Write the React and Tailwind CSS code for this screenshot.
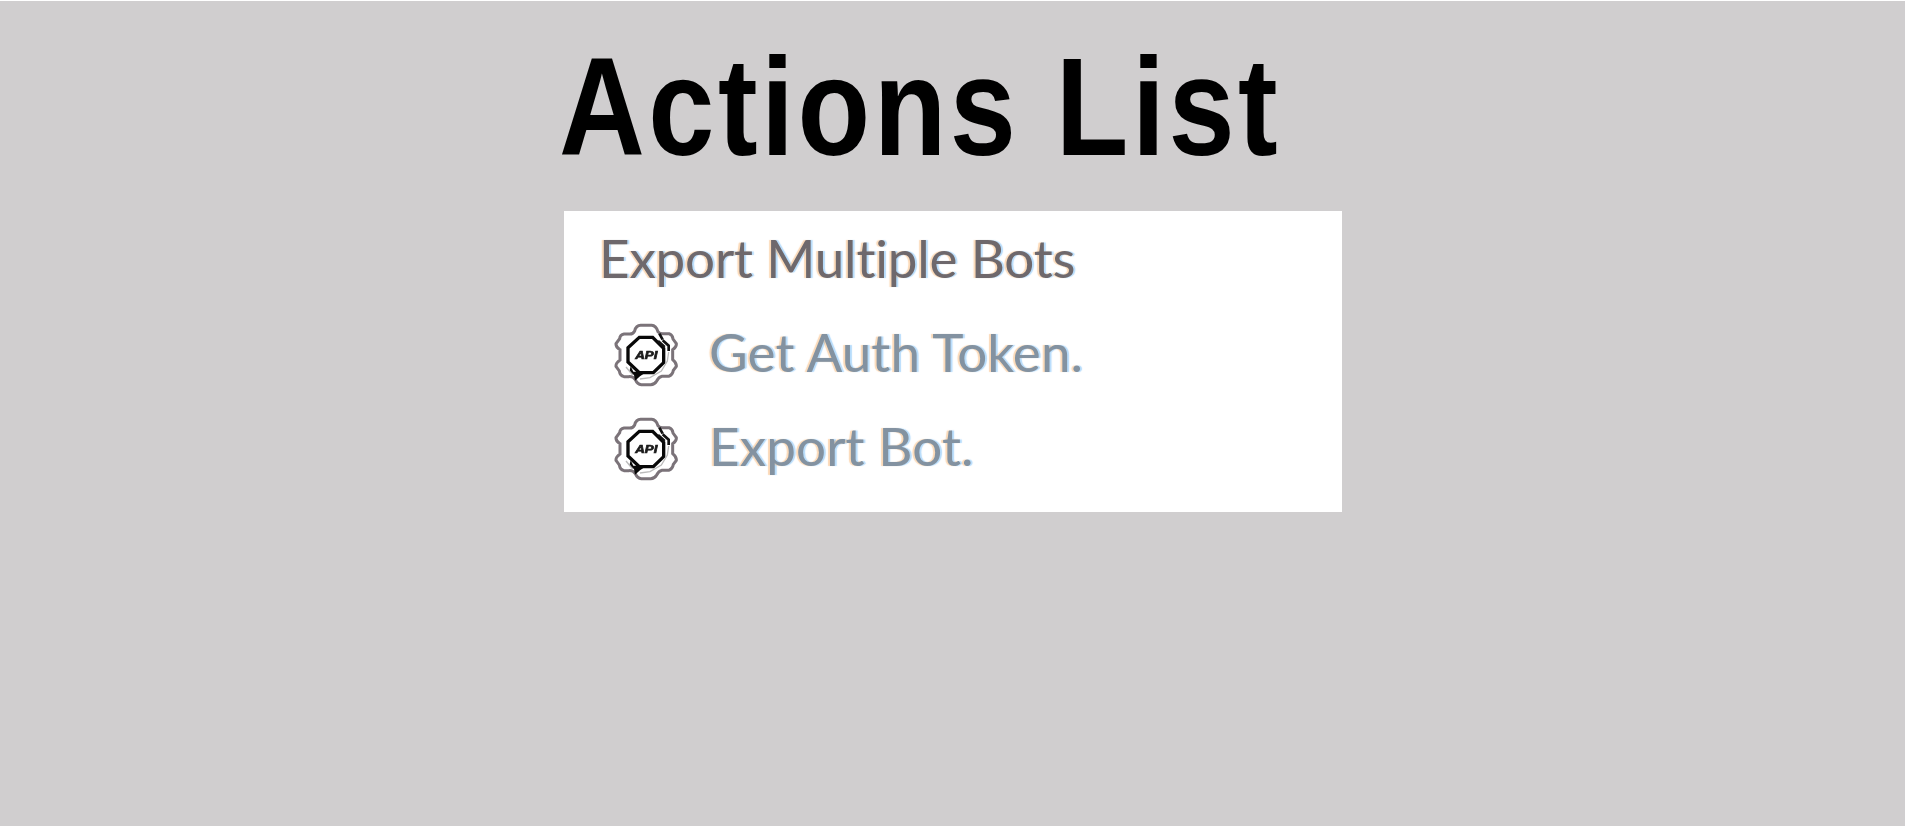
import React from 'react';

const ApiGearIcon = () => (
  <svg viewBox="42 38 192 192" className="mt-[5px] w-16 h-16 shrink-0 blur-[0.7px]" fill="none">
    {/* Scalloped outline */}
    <path
      d="M104 62Q108 45 122 45H155Q168 46 174 64Q180 71 190 70H207Q218 74 219 86L229 100Q230 110 218 118V148Q230 158 229 168L220 180Q218 194 206 198H186Q176 200 170 212Q164 223 152 223H124Q112 222 106 208Q98 197 86 199H72Q60 196 58 182L48 168Q47 158 60 149V118Q47 110 48 100L59 85Q60 73 72 71H86Q98 73 104 62Z"
      stroke="#7b7379"
      strokeWidth="9"
    />
    {/* Ring */}
    <path
      d="M118 81H158L191 114V157L160 187H118L84 155V112Z"
      stroke="#080808"
      strokeWidth="10"
    />
    {/* Rotation arrows */}
    <path d="M178 70L188 88M174 92L194 110M188 90L206 106V122" stroke="#111" strokeWidth="8" />
    <path d="M92 168L100 184H140L120 198L105 211L102 194L88 184" fill="#080808" />
    <path d="M78 170L98 194M206 125L202 152L184 182L150 202L120 206" stroke="#bbb" strokeWidth="4" />
    <text
      x="139"
      y="146"
      textAnchor="middle"
      textLength="66"
      lengthAdjust="spacingAndGlyphs"
      fontSize="31"
      fontWeight="900"
      fontStyle="italic"
      fill="#1c1c1c"
      stroke="#1c1c1c"
      strokeWidth="2"
      className="font-['Liberation_Sans',sans-serif]"
    >
      API
    </text>
  </svg>
);

const actions = ['Get Auth Token.', 'Export Bot.'];

const App = () => {
  return (
    <div className="min-h-screen bg-[#d0cecf] border-t border-white">
      <div className="ml-[564px] w-[778px]">
        {/* Title */}
        <h1 className="h-[210px] pt-[31px] -ml-[5px] origin-left scale-x-[0.855] whitespace-nowrap font-['Liberation_Sans',sans-serif] text-[139px] leading-[150px] tracking-[4.1px] font-bold text-black">
          Actions List
        </h1>

        {/* Actions panel */}
        <div className="h-[301px] bg-white font-['Lato',sans-serif] text-[53px] leading-[94px] whitespace-nowrap [font-variant-ligatures:none]">
          <h2 className="h-[94px] pl-[35px] tracking-[-0.2px] text-[#6e686c] [text-shadow:-2px_0_1px_#f5a04a66,2px_0_1px_#4aa8f566]">
            Export Multiple Bots
          </h2>
          <ul>
            {actions.map((action) => (
              <li key={action} className="flex items-center h-[94px] pl-[50px] gap-[31px]">
                <ApiGearIcon />
                <span className="tracking-[0.1px] text-[#8392a1] [text-shadow:-2px_0_1px_#f5a04a66,2px_0_1px_#4aa8f566]">
                  {action}
                </span>
              </li>
            ))}
          </ul>
        </div>
      </div>
    </div>
  );
};

export default App;
